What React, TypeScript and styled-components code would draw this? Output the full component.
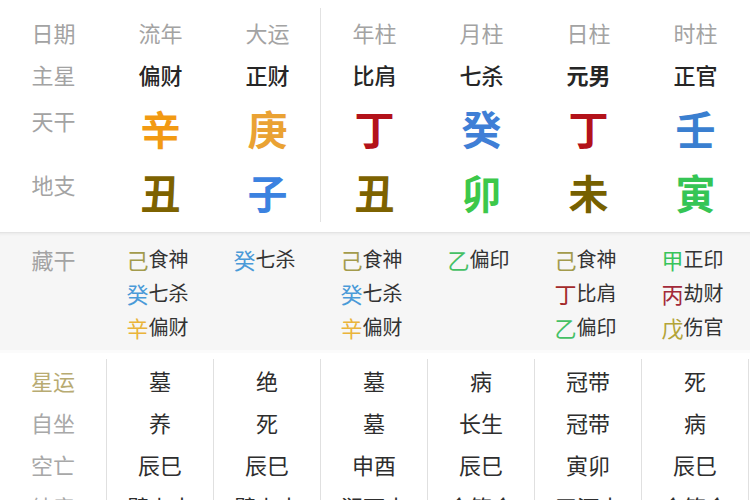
import React from "react";
import styled, { createGlobalStyle } from "styled-components";

const Global = createGlobalStyle`
  html, body { margin: 0; padding: 0; background: #fff; }
  body { overflow: hidden; }
  #root { width: 750px; height: 500px; overflow: hidden; }
`;

const Page = styled.div`
  width: 750px;
  font-family: "Noto Sans CJK SC", "Noto Sans", sans-serif;
  color: #2b2b2b;
`;

const Top = styled.section`
  display: grid;
  grid-template-columns: 107px repeat(6, 107px);
  grid-template-rows: 46px 38px 70px 58px;
  padding: 9px 0 11px;
  background: linear-gradient(#e2e2e2, #e2e2e2) 320px 8px / 1px 214px no-repeat, #fff;
`;

const Cell = styled.div<{ $lift?: boolean }>`
  display: flex;
  align-items: center;
  justify-content: center;
  line-height: 1;
  ${(p) => (p.$lift ? "padding-bottom: 16px;" : "")}
`;

const Label = styled(Cell)<{ $tone?: string }>`
  font-size: 22px;
  color: ${(p) => p.$tone ?? "#a3a3a3"};
`;

const Head = styled(Cell)`
  font-size: 22px;
  color: #a3a3a3;
`;

const Star = styled(Cell)<{ $bold?: boolean }>`
  font-size: 22px;
  font-weight: ${(p) => (p.$bold ? 700 : 500)};
  color: #262626;
`;

const Big = styled(Cell)<{ $c: string }>`
  font-size: 40px;
  font-weight: 700;
  color: ${(p) => p.$c};
`;

const Hidden = styled.section`
  display: grid;
  grid-template-columns: 107px repeat(6, 107px);
  padding: 9px 0 6px;
  background: #f6f6f6;
  border-top: 1px solid #e4e4e4;
  box-shadow: inset 0 3px 3px -2px rgba(0, 0, 0, 0.06);
  border-bottom: 3px solid #fbfbfb;
`;

const HiddenLabel = styled.div`
  font-size: 22px;
  color: #a3a3a3;
  line-height: 34px;
  text-align: center;
`;

const Stack = styled.div`
  display: flex;
  flex-direction: column;
  align-items: center;
  padding-right: 4px;
`;

const StemLine = styled.div`
  display: flex;
  align-items: center;
  height: 34px;
  width: 64px;
`;

const Stem = styled.span<{ $c: string }>`
  font-size: 22px;
  color: ${(p) => p.$c};
  line-height: 1;
`;

const God = styled.span`
  font-size: 20px;
  color: #333;
  line-height: 1;
`;

const Bottom = styled.section`
  display: grid;
  grid-template-columns: 107px repeat(6, 107px);
  grid-auto-rows: 42px;
  padding-top: 6px;
  background: #fff;
`;

const BCell = styled.div<{ $tone?: string; $size?: number }>`
  display: flex;
  align-items: center;
  justify-content: center;
  border-right: 1px solid #e0e0e0;
  font-size: ${(p) => p.$size ?? 22}px;
  color: ${(p) => p.$tone ?? "#2e2e2e"};
  line-height: 1;
`;

const heads = ["流年", "大运", "年柱", "月柱", "日柱", "时柱"];
const stars = ["偏财", "正财", "比肩", "七杀", "元男", "正官"];
const stems: [string, string][] = [
  ["辛", "#f29a12"],
  ["庚", "#eaa233"],
  ["丁", "#b3121a"],
  ["癸", "#3f7fd6"],
  ["丁", "#b3121a"],
  ["壬", "#3a7fd0"],
];
const branches: [string, string][] = [
  ["丑", "#7d6200"],
  ["子", "#3b82e0"],
  ["丑", "#7d6200"],
  ["卯", "#3cc84a"],
  ["未", "#766000"],
  ["寅", "#35c555"],
];

const C = {
  ji: "#a39b4c",
  gui: "#4a9ad8",
  xin: "#eab43a",
  yi: "#45c065",
  ding: "#a32a2a",
  jia: "#38c45a",
  bing: "#a32a3a",
  wu: "#b3a438",
};

const hidden: [string, string, string][][] = [
  [["己", "食神", C.ji], ["癸", "七杀", C.gui], ["辛", "偏财", C.xin]],
  [["癸", "七杀", C.gui]],
  [["己", "食神", C.ji], ["癸", "七杀", C.gui], ["辛", "偏财", C.xin]],
  [["乙", "偏印", C.yi]],
  [["己", "食神", C.ji], ["丁", "比肩", C.ding], ["乙", "偏印", C.yi]],
  [["甲", "正印", C.jia], ["丙", "劫财", C.bing], ["戊", "伤官", C.wu]],
];

const bottomRows: { label: string; tone?: string; values: string[] }[] = [
  { label: "星运", tone: "#b8ab72", values: ["墓", "绝", "墓", "病", "冠带", "死"] },
  { label: "自坐", values: ["养", "死", "墓", "长生", "冠带", "病"] },
  { label: "空亡", values: ["辰巳", "辰巳", "申酉", "辰巳", "寅卯", "辰巳"] },
  { label: "纳音", values: ["壁上土", "壁上土", "涧下水", "金箔金", "天河水", "金箔金"] },
];

export default function App() {
  return (
    <Page>
      <Global />
      <Top>
        <Label>日期</Label>
        {heads.map((h, i) => (
          <Head key={"h" + i}>{h}</Head>
        ))}
        <Label>主星</Label>
        {stars.map((s, i) => (
          <Star key={"s" + i} $bold={s === "元男"}>
            {s}
          </Star>
        ))}
        <Label $lift>天干</Label>
        {stems.map(([t, c], i) => (
          <Big key={"t" + i} $c={c}>
            {t}
          </Big>
        ))}
        <Label $lift>地支</Label>
        {branches.map(([t, c], i) => (
          <Big key={"b" + i} $c={c}>
            {t}
          </Big>
        ))}
      </Top>
      <Hidden>
        <HiddenLabel>藏干</HiddenLabel>
        {hidden.map((col, i) => (
          <Stack key={"c" + i}>
            {col.map(([s, g, c], j) => (
              <StemLine key={j}>
                <Stem $c={c}>{s}</Stem>
                <God>{g}</God>
              </StemLine>
            ))}
          </Stack>
        ))}
      </Hidden>
      <Bottom>
        {bottomRows.map((r) => (
          <React.Fragment key={r.label}>
            <BCell $tone={r.tone ?? "#a8a8a8"}>{r.label}</BCell>
            {r.values.map((v, i) => (
              <BCell key={i}>{v}</BCell>
            ))}
          </React.Fragment>
        ))}
      </Bottom>
    </Page>
  );
}
